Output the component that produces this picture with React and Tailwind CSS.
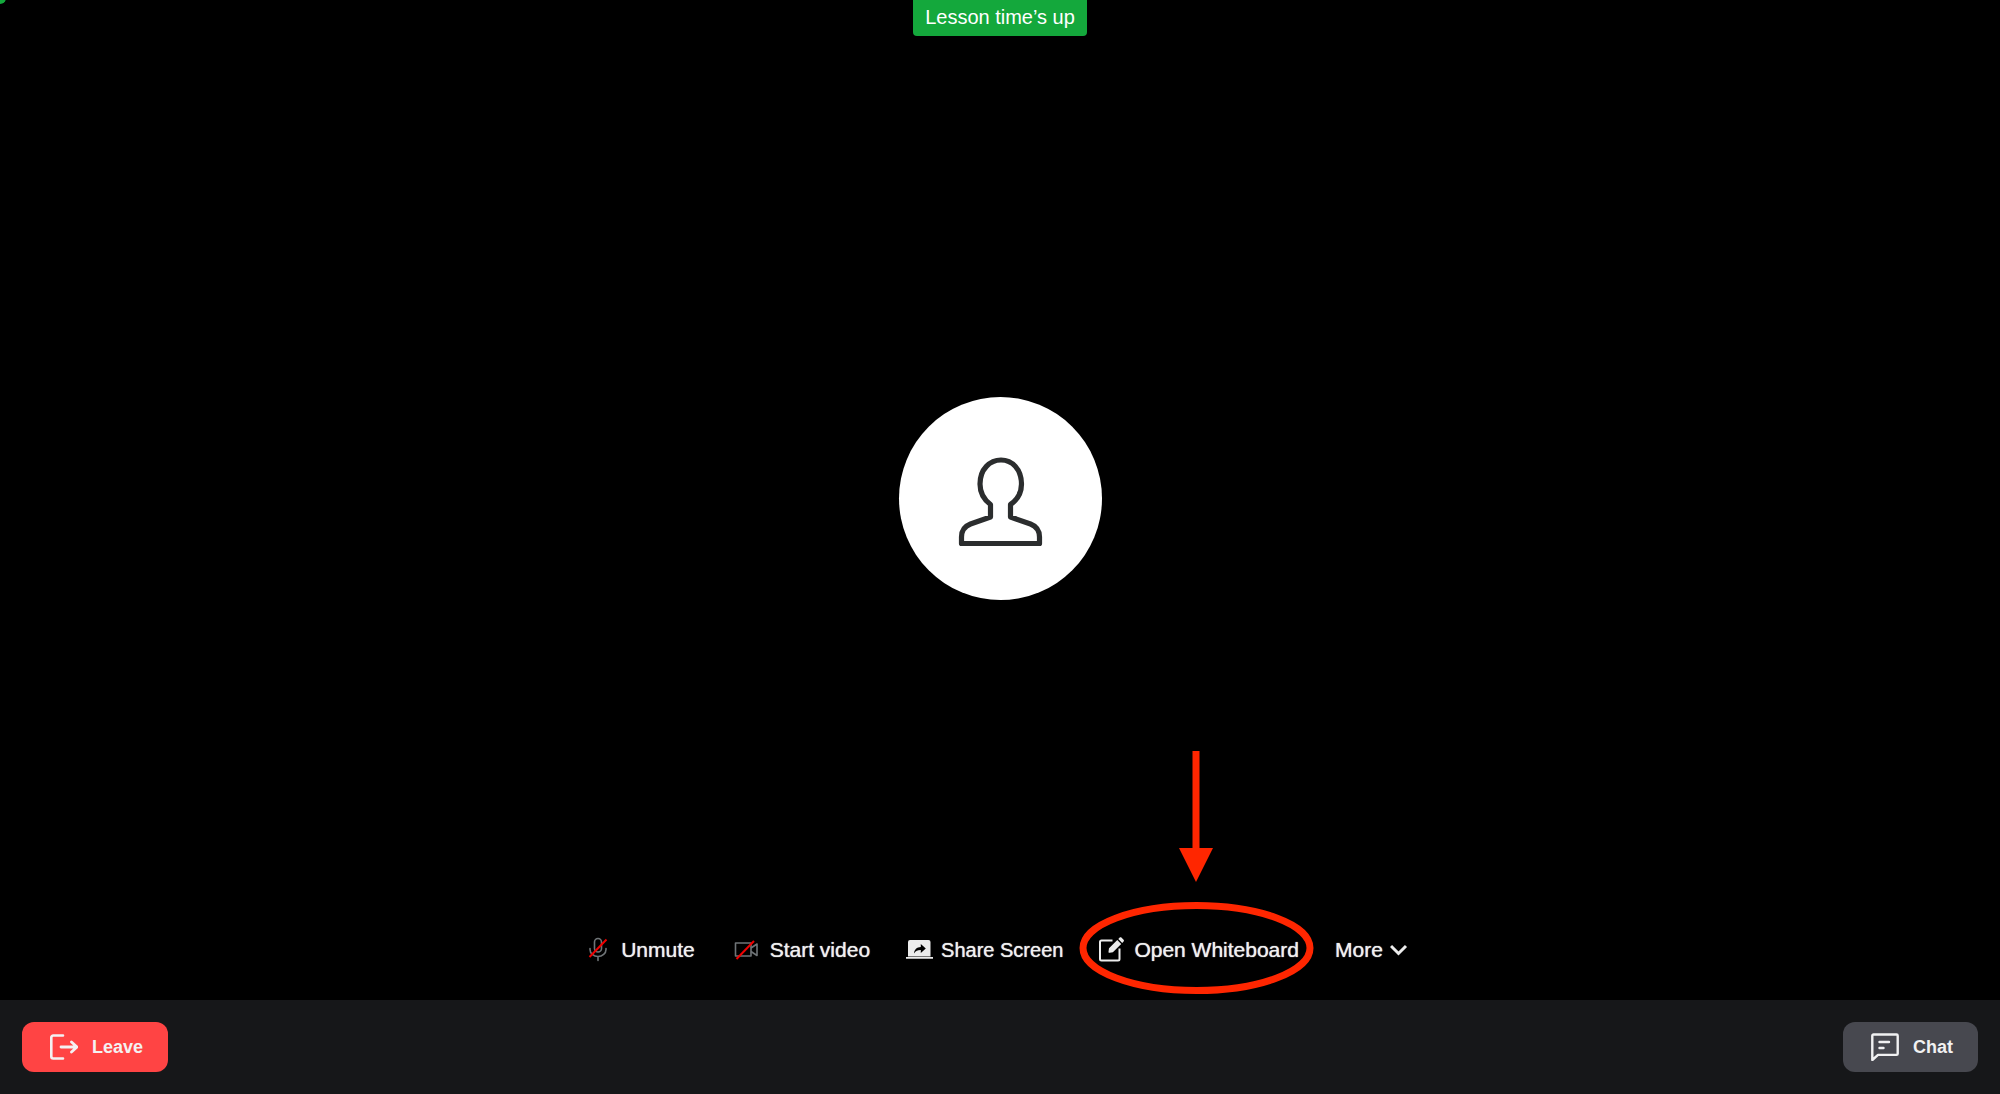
const MicOffIcon = () => (
  <svg className="h-7 w-8" viewBox="0 0 32 28" fill="none" aria-hidden="true">
    <g stroke="#6f7477" strokeWidth="1.6" strokeLinecap="round">
      <rect x="12.5" y="2.500" width="7" height="13.5" rx="3.5" />
      <path d="M8 12.500v1a8 7 0 0 0 16 0v-1M16 20.500v4" />
    </g>
    <path d="M7.5 21 24.5 3.500" stroke="#f00000" strokeWidth="2" />
  </svg>
);

const VideoOffIcon = () => (
  <svg className="h-7 w-8" viewBox="0 0 32 28" fill="none" aria-hidden="true">
    <g stroke="#6f7477" strokeWidth="1.6" strokeLinejoin="round">
      <rect x="4.5" y="7" width="15.5" height="13" />
      <path d="M20 12 26 8v11.500l-6-4" />
    </g>
    <path d="M5.500 23 23 5" stroke="#f00000" strokeWidth="2" />
  </svg>
);

const ShareIcon = () => (
  <svg className="h-7 w-7" viewBox="0 0 28 28" aria-hidden="true">
    <path
      d="M4 4h18.500a2 2 0 0 1 2 2v14.500H2V6a2 2 0 0 1 2-2zM0 21h27v1.800H0z"
      fill="#ececec"
    />
    <path d="M8 17.500c.4-4.200 2.800-6.300 6.800-6.600V8l5 4.500-5 4.500v-2.900c-3-.1-5 .8-6.800 3.400z" fill="#000" />
  </svg>
);

const WhiteboardIcon = () => (
  <svg className="h-7 w-7" viewBox="0 0 28 28" fill="none" aria-hidden="true">
    <path
      d="M13.500 4.500H2.500A1.500 1.500 0 0 0 1 6v17a1.500 1.500 0 0 0 1.500 1.500h16.500a1.500 1.500 0 0 0 1.500-1.500V12.500"
      stroke="#ececec"
      strokeWidth="2"
    />
    <path
      d="m10 12.300 8.300-8.300 3.900 3.900-8.300 8.300-3.200.6a.9.9 0 0 1-1.200-1zM19.300 3l1.400-1.400c.5-.5 1.200-.5 1.700 0l2.200 2.200c.5.500.5 1.200 0 1.700l-1.400 1.400z"
      fill="#ececec"
    />
  </svg>
);

const ChevronIcon = () => (
  <svg className="h-7 w-7" viewBox="0 0 28 28" fill="none" aria-hidden="true">
    <path d="m1 10 7.500 7.500 7.500-7.500" stroke="#ececec" strokeWidth="3" />
  </svg>
);

const LeaveIcon = () => (
  <svg className="h-7 w-7" viewBox="0 0 28 28" fill="none" stroke="#f4f1f2" strokeLinecap="round" strokeLinejoin="round" aria-hidden="true">
    <path d="M13 2.500H3.300A2 2 0 0 0 1.300 4.500v19a2 2 0 0 0 2 2H13" strokeWidth="2.600" />
    <path d="M11 14h16M21.500 9l5.500 5-5.500 5" strokeWidth="2.800" />
  </svg>
);

const ChatIcon = () => (
  <svg className="h-7 w-7" viewBox="0 0 28 28" fill="none" stroke="#f1f1f2" strokeWidth="2.400" strokeLinecap="round" strokeLinejoin="round" aria-hidden="true">
    <path d="M2.500 1.500h23a1.200 1.200 0 0 1 1.200 1.200v18a1.200 1.200 0 0 1-1.200 1.200H7L1.300 27V2.700a1.200 1.200 0 0 1 1.200-1.200z" />
    <path d="M8.500 9H18M8.500 15h4" />
  </svg>
);

const AvatarIcon = () => (
  <svg className="h-24 w-24" viewBox="0 0 96 96" fill="none" aria-hidden="true">
    <path
      d="M38.500 53.500V66L18.500 73q-9 3.500-9 13v6.500h78V86q0-9.500-9-13l-20-7V53.500C65 49 69.500 42 69.500 33 69.500 18 60 9 49 9S28 18 28 33c0 9 4.500 16 10.500 20.500z"
      stroke="#2b2d2e"
      strokeWidth="5.200"
      strokeLinejoin="round"
    />
  </svg>
);

// Arrow and ring drawn over the whiteboard button
const Highlight = () => (
  <svg
    className="pointer-events-none absolute -bottom-7 left-1/2 h-[244px] w-[240px] -translate-x-1/2"
    viewBox="0 0 240 244"
    fill="none"
    aria-hidden="true"
  >
    <path d="M113.500 1h7v97H134l-17 34-17-34h13.500z" fill="#ff2600" />
    <ellipse cx="117.500" cy="198" rx="113.500" ry="42.500" stroke="#ff2600" strokeWidth="7" />
  </svg>
);

const ControlButton = ({ children }) => (
  <button
    type="button"
    className="relative flex h-8 cursor-pointer items-center gap-[7px] whitespace-nowrap text-[21px] leading-8 text-[#f0f0f0] [text-shadow:0_0_1px_#f0f0f0]"
  >
    {children}
  </button>
);

const App = () => {
  return (
    <div className="flex min-h-screen flex-col bg-black font-['Liberation_Sans',Arial,sans-serif]">
      <main className="relative flex flex-1 flex-col items-center overflow-hidden">
        <span className="absolute -left-2 -top-2 h-3 w-3.5 rounded-full bg-[#14a83c]" />

        <div className="h-9 rounded-b-sm bg-[#14a83c] px-3 text-xl leading-[35px] text-white">
          Lesson time’s up
        </div>

        <div className="flex flex-1 items-center pt-[27px]">
          <div className="flex h-[203px] w-[203px] items-center justify-center rounded-full bg-white">
            <AvatarIcon />
          </div>
        </div>

        <div className="flex justify-center gap-9 pb-[34px]">
          <ControlButton>
            <MicOffIcon />
            Unmute
          </ControlButton>
          <ControlButton>
            <VideoOffIcon />
            Start video
          </ControlButton>
          <ControlButton>
            <ShareIcon />
            <span className="text-xl leading-8">Share Screen</span>
          </ControlButton>
          <ControlButton>
            <WhiteboardIcon />
            Open Whiteboard
            <Highlight />
          </ControlButton>
          <ControlButton>
            More
            <ChevronIcon />
          </ControlButton>
        </div>
      </main>

      <footer className="flex items-center justify-between bg-[#161719] px-[22px] py-[22px]">
        <button
          type="button"
          className="flex h-[50px] cursor-pointer items-center gap-3.5 rounded-xl bg-[#ff4444] pl-7 pr-[25px] text-lg font-bold text-[#f4f1f2]"
        >
          <LeaveIcon />
          Leave
        </button>
        <button
          type="button"
          className="flex h-[50px] cursor-pointer items-center gap-3.5 rounded-xl bg-[#47484f] pl-7 pr-[25px] text-lg font-bold text-[#f1f1f2]"
        >
          <ChatIcon />
          Chat
        </button>
      </footer>
    </div>
  );
};

export default App;
